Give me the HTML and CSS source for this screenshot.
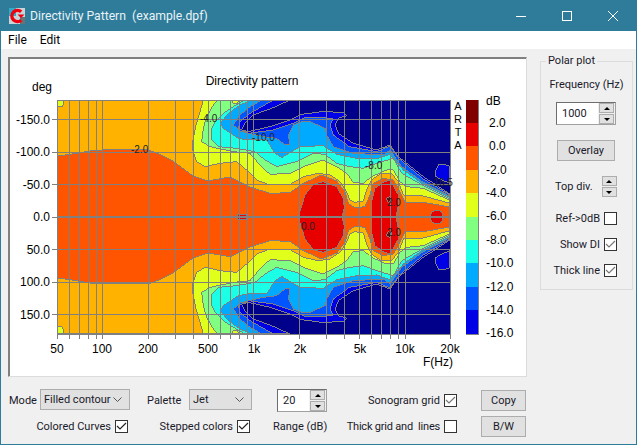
FILE: index.html
```html
<!DOCTYPE html>
<html lang="en">
<head>
<meta charset="utf-8">
<title>Directivity Pattern (example.dpf)</title>
<link rel="stylesheet" href="styles.css">
</head>
<body>
<div class="window">
  <header class="titlebar">
    <svg class="appicon" width="16" height="16" viewBox="0 0 16 16">
      <rect width="16" height="16" fill="#c9d4d8"/>
      <rect x="0" y="0" width="7" height="8" fill="#35a8c8"/>
      <rect x="11" y="9" width="5" height="7" fill="#6a7276"/>
      <path d="M12.2 3.8A5.6 5.6 0 1 0 12.2 12.2" fill="none" stroke="#f0000f" stroke-width="3.4"/>
      <path d="M8.5 6.5h7l-3.500 3.500z" fill="#f0000f"/>
    </svg>
    <span class="title">Directivity Pattern&nbsp; (example.dpf)</span>
    <div class="winbtns">
      <svg width="12" height="12" viewBox="0 0 12 12"><path d="M1 6.500h10" stroke="#fff"/></svg>
      <svg width="12" height="12" viewBox="0 0 12 12"><rect x="1.500" y="1.500" width="9" height="9" fill="none" stroke="#fff"/></svg>
      <svg width="12" height="12" viewBox="0 0 12 12"><path d="M1 1l10 10M11 1L1 11" stroke="#fff"/></svg>
    </div>
  </header>
  <nav class="menubar"><span>File</span><span>Edit</span></nav>
  <main class="content">
    <div class="upper">
      <section class="plot">
        <svg class="chart" width="517" height="318" viewBox="9 58 517 318">
          <defs><clipPath id="area"><rect x="57" y="100" width="394" height="235"/></clipPath></defs>
          <g clip-path="url(#area)">
            <rect x="57" y="100" width="394" height="235" fill="#00008b"/>
            <g transform="translate(190 95) scale(.33333)">
              <g id="half" class="contours">
                <polygon fill="#0000e6" points="738,225 745,210 765,208 780,215 780,265 755,255 738,245"/>
                <polygon fill="#0000e6" points="-399,15 300,15 250,38 190,60 165,85 155,105 175,110 240,95 300,75 335,58 395,50 460,52 470,62 445,70 435,88 445,115 490,145 560,165 600,150 625,185 700,245 780,297 780,366 -399,366"/>
                <polygon fill="#0055ff" points="-399,15 250,15 215,35 180,55 150,80 145,100 175,115 250,105 310,85 345,68 400,67 430,72 420,90 430,120 478,155 560,170 600,153 628,192 700,252 780,300 780,366 -399,366"/>
                <polygon fill="#00aaff" points="-399,15 216,15 180,35 150,60 130,90 150,108 190,118 220,125 260,130 285,150 300,150 295,120 310,90 340,78 360,80 405,100 410,120 430,155 490,175 580,180 600,165 635,215 700,262 780,304 780,366 -399,366"/>
                <polygon fill="#1affe6" points="-399,15 185,15 150,30 115,55 90,85 100,100 145,130 175,135 230,135 255,175 275,188 330,155 400,152 440,178 500,190 560,192 600,178 640,225 700,268 780,308 780,366 -399,366"/>
                <polygon fill="#80ff80" points="-399,15 165,15 130,35 100,55 75,80 63,105 65,135 85,155 140,160 195,170 225,195 260,215 320,200 370,175 405,178 440,205 480,215 520,220 560,205 610,190 635,235 700,272 780,312 780,366 -399,366"/>
                <polygon fill="#e0ff1a" points="125,15 128,25 142,27 146,15"/>
                <polygon fill="#e0ff1a" points="-399,15 85,15 70,30 50,65 40,100 35,140 60,155 130,170 180,175 210,210 240,238 300,235 340,215 400,195 440,215 470,235 490,262 520,265 545,245 590,225 610,225 630,260 650,275 700,280 780,316 780,366 -399,366"/>
                <polygon fill="#ffb300" points="-399,15 40,15 30,50 18,90 8,140 8,165 20,200 45,215 90,205 140,200 170,225 200,255 240,270 300,268 340,245 385,235 420,240 450,260 470,290 480,315 495,322 520,318 530,285 545,255 570,237 605,235 625,260 640,300 700,303 780,325 780,366 -399,366"/>
                <polygon fill="#e0ff1a" points="-399,15 -380,15 -378,28 -385,36 -399,36"/>
                <polygon fill="#ff5500" points="-399,183 -360,178 -300,168 -264,165 -126,165 -90,178 -51,198 9,243 54,258 120,246 180,276 240,295 300,293 340,265 395,240 440,258 465,290 475,325 495,338 525,335 540,300 550,265 580,250 610,255 630,290 645,322 700,322 780,336 780,366 -399,366"/>
                <polygon fill="#e60000" points="325,366 345,300 370,268 400,260 440,275 460,310 463,340 455,366"/>
                <polygon fill="#e60000" points="545,366 545,320 555,280 580,262 600,255 625,300 625,330 618,366"/>
                <polygon fill="#e60000" points="720,366 725,350 740,345 755,350 760,366"/>
                <polygon fill="#e60000" points="143,366 143,358 170,358 170,366"/>
                <polygon fill="#800000" points="588,310 600,305 606,318 594,322"/>
              </g>
              <use href="#half" transform="matrix(1 0 0 -1 0 732)"/>
            </g>
          </g>
          <path class="grid" d="M57.500 100V339M69.500 100V339M79.500 100V339M88.500 100V339M96.500 100V339M102.500 100V339M148.500 100V339M175.500 100V339M193.500 100V339M208.500 100V339M220.500 100V339M230.500 100V339M239.500 100V339M247.500 100V339M253.500 100V339M299.500 100V339M326.500 100V339M344.500 100V339M359.500 100V339M371.500 100V339M381.500 100V339M390.500 100V339M398.500 100V339M405.500 100V339M450.500 100V339M57 100.500H451M52 119.500H451M52 152.500H451M52 184.500H451M52 217.500H451M52 249.500H451M52 282.500H451M52 314.500H451M57 334.500H451"/>

          <text class="t" x="252" y="85" text-anchor="middle">Directivity pattern</text>
          <text class="t" x="32" y="91">deg</text>
          <g class="t end">
            <text x="50" y="124">-150.0</text><text x="50" y="156">-100.0</text><text x="50" y="189">-50.0</text>
            <text x="50" y="221">0.0</text><text x="50" y="254">50.0</text><text x="50" y="286">100.0</text><text x="50" y="319">150.0</text>
          </g>
          <g class="t mid">
            <text x="57" y="353">50</text><text x="102" y="353">100</text><text x="148" y="353">200</text><text x="208" y="353">500</text>
            <text x="254" y="353">1k</text><text x="300" y="353">2k</text><text x="360" y="353">5k</text><text x="405" y="353">10k</text><text x="450" y="353">20k</text>
          </g>
          <text class="t" x="423" y="366">F(Hz)</text>
          <g class="t mid arta">
            <text x="458" y="110">A</text><text x="458" y="123">R</text><text x="458" y="136">T</text><text x="458" y="149">A</text>
          </g>
          <g class="bar">
            <rect x="466" y="100" width="13" height="23" fill="#800000"/>
            <rect x="466" y="123" width="13" height="23" fill="#e60000"/>
            <rect x="466" y="146" width="13" height="24" fill="#ff5500"/>
            <rect x="466" y="170" width="13" height="23" fill="#ffb300"/>
            <rect x="466" y="193" width="13" height="24" fill="#e0ff1a"/>
            <rect x="466" y="217" width="13" height="23" fill="#80ff80"/>
            <rect x="466" y="240" width="13" height="23" fill="#1affe6"/>
            <rect x="466" y="263" width="13" height="24" fill="#00aaff"/>
            <rect x="466" y="287" width="13" height="23" fill="#0055ff"/>
            <rect x="466" y="310" width="13" height="24" fill="#0000e6"/>
          </g>
          <path class="grid" d="M478.500 100V334.500M466 334.500H479"/>
          <g class="t">
            <text x="486" y="105">dB</text><text x="489" y="127">2.0</text><text x="489" y="150">0.0</text>
            <text x="486" y="174">-2.0</text><text x="486" y="197">-4.0</text><text x="486" y="220">-6.0</text><text x="486" y="244">-8.0</text>
            <text x="486" y="267">-10.0</text><text x="486" y="291">-12.0</text><text x="486" y="314">-14.0</text><text x="486" y="337">-16.0</text>
          </g>
          <g class="t small">
            <text x="200" y="122">-4.0</text><text x="252" y="141">-10.0</text><text x="131" y="153">-2.0</text><text x="365" y="169">-8.0</text>
            <text x="430" y="186">-16.5</text><text x="387" y="206">2.0</text><text x="301" y="230">0.0</text><text x="387" y="236">2.0</text>
          </g>
        </svg>
      </section>
      <aside class="polar">
        <span class="legend">Polar plot</span>
        <div class="freq-label">Frequency (Hz)</div>
        <div class="spin freq"><span class="spin-value">1000</span><span class="arrows"><i class="up"></i><i class="down"></i></span></div>
        <button class="btn overlay">Overlay</button>
        <div class="topdiv"><span>Top div.</span><span class="arrows"><i class="up"></i><i class="down"></i></span></div>
        <label class="check"><span>Ref-&gt;0dB</span><span class="box"></span></label>
        <label class="check"><span>Show DI</span><span class="box"><svg width="11" height="11" viewBox="0 0 11 11"><path class="tick soft" d="M1 5l3 3 6-6"/></svg></span></label>
        <label class="check"><span>Thick line</span><span class="box"><svg width="11" height="11" viewBox="0 0 11 11"><path class="tick soft" d="M1 5l3 3 6-6"/></svg></span></label>
      </aside>
    </div>
    <div class="controls">
      <div class="cell c1"><span>Mode</span><div class="select mode"><span>Filled contour</span><svg width="9" height="5" viewBox="0 0 9 5"><path class="chev" d="M.5 .5l4 4 4-4"/></svg></div></div>
      <div class="cell c2"><span>Palette</span><div class="select palette"><span>Jet</span><svg width="9" height="5" viewBox="0 0 9 5"><path class="chev" d="M.5 .5l4 4 4-4"/></svg></div></div>
      <div class="cell c3"><div class="spin range"><span class="spin-value">20</span><span class="arrows"><i class="up"></i><i class="down"></i></span></div></div>
      <label class="check c4"><span>Sonogram grid</span><span class="box"><svg width="11" height="11" viewBox="0 0 11 11"><path class="tick soft" d="M1 5l3 3 6-6"/></svg></span></label>
      <button class="btn c5">Copy</button>
      <label class="check c1 r2"><span>Colored Curves</span><span class="box"><svg width="11" height="11" viewBox="0 0 11 11"><path class="tick" d="M1 5l3 3 6-6"/></svg></span></label>
      <label class="check c2 r2"><span>Stepped colors</span><span class="box"><svg width="11" height="11" viewBox="0 0 11 11"><path class="tick" d="M1 5l3 3 6-6"/></svg></span></label>
      <div class="cell c3 r2 range-label"><span>Range (dB)</span></div>
      <label class="check c4 r2"><span class="tight">Thick grid and &nbsp;lines</span><span class="box"></span></label>
      <button class="btn c5 r2">B/W</button>
    </div>
  </main>
</div>
</body>
</html>
```
FILE: styles.css
```css
* { box-sizing: border-box; }
html, body { margin: 0; padding: 0; }
body { width: 637px; height: 445px; overflow: hidden; font: 11px/16px Roboto, "Open Sans", sans-serif; color: #1a1a2a; }

.window { width: 637px; height: 445px; display: flex; flex-direction: column; background: #f0f0f0; border: 1px solid #2e7c9a; border-top: 0; }

.titlebar { height: 31px; flex: none; margin: 0 -1px; padding: 0 18px 0 9px; display: flex; align-items: center; background: #2e7c9a; color: #e8f2f6; }
.appicon { flex: none; }
.title { margin-left: 5px; flex: 1; white-space: nowrap; font-size: 12.2px; }
.winbtns { display: flex; gap: 34px; }
.winbtns svg { display: block; }

.menubar { height: 18px; flex: none; background: #fff; display: flex; gap: 13px; padding-left: 7px; align-items: center; color: #000; font-size: 12px; }

.content { flex: 1; display: flex; flex-direction: column; }
.upper { display: flex; align-items: flex-start; padding: 8px 0 0 7px; }

.plot { width: 519px; height: 320px; background: #fff; border: 1px solid; border-color: #808080 #dcdcdc #dcdcdc #808080; box-shadow: inset 1px 1px 0 #808080; flex: none; }
.chart { display: block; }
.t { font: 12px "Liberation Sans", Arial, sans-serif; fill: #000; }
.small { font-size: 10px; fill: #222; }
.arta { font-size: 11px; }
.end { text-anchor: end; }
.mid { text-anchor: middle; }
.contours polygon { stroke: #808080; stroke-width: 3; shape-rendering: crispEdges; }
.grid { fill: none; stroke: #808080; stroke-width: 1; shape-rendering: crispEdges; }
.bar rect { shape-rendering: crispEdges; }

.polar { position: relative; width: 93px; height: 229px; margin: 4px 0 0 13px; border: 1px solid #dcdcdc; display: flex; flex-direction: column; align-items: center; flex: none; }
.legend { position: absolute; left: 5px; top: -8px; padding: 0 2px; background: #f0f0f0; line-height: 14px; }
.freq-label { margin-top: 15px; white-space: nowrap; }
.spin { display: flex; align-items: center; background: #fff; border: 1px solid #a0a0a0; border-top-color: #6e6e6e; border-left-color: #6e6e6e; }
.spin-value { flex: 1; padding-left: 5px; }
.freq { width: 60px; height: 23px; margin-top: 9px; align-self: flex-start; margin-left: 15px; }
.range { width: 50px; height: 23px; }
.arrows { display: flex; flex-direction: column; gap: 1px; }
.arrows i { display: flex; width: 15px; height: 10px; background: #e1e1e1; border: 1px solid #adadad; align-items: center; justify-content: center; }
.arrows i::before { content: ""; border-left: 3px solid transparent; border-right: 3px solid transparent; }
.arrows .up::before { border-bottom: 3px solid #000; }
.arrows .down::before { border-top: 3px solid #000; }
.spin .arrows { width: 17px; padding: 0 1px; background: #f0f0f0; height: 100%; justify-content: center; }

.btn { display: block; padding: 0; font: inherit; color: inherit; background: #e1e1e1; border: 1px solid #adadad; }
.overlay { width: 58px; height: 21px; margin-top: 15px; align-self: flex-start; margin-left: 16px; }

.topdiv { align-self: flex-start; display: flex; align-items: center; gap: 9px; margin: 15px 0 0 14px; }
.check { display: flex; align-items: center; justify-content: flex-end; gap: 4px; white-space: nowrap; }
.polar .check { align-self: stretch; padding-right: 15px; height: 13px; margin-top: 13px; }
.polar .topdiv + .check { margin-top: 15px; }
.box { width: 13px; height: 13px; flex: none; background: #fff; border: 1px solid #333; display: block; }
.box svg { display: block; }
.tick { fill: none; stroke: #222; stroke-width: 1.2; }
.tick.soft { stroke: #777; }
.tight { letter-spacing: -.2px; }

.controls { margin-top: 12px; display: grid; grid-template-columns: 121px 122px 78px 127px 69px; grid-template-rows: 23px 21px; row-gap: 4px; padding-left: 8px; }
.cell { display: flex; align-items: flex-start; justify-content: space-between; white-space: nowrap; }
.c1 { grid-column: 1; }
.c1.check { padding-right: 2px; }
.c2 { grid-column: 2; margin-left: 17px; }
.c2.check { padding-right: 2px; }
.c3 { grid-column: 3; margin-left: 25px; }
.range-label { margin-left: 21px; align-items: center; }
.c4 { grid-column: 4; }
.c5 { grid-column: 5; margin-left: 24px; width: 45px; height: 21px; }
.btn.c5:not(.r2) { margin-top: 1px; }
.r2 { grid-row: 2; }
.cell > span { line-height: 24px; }
.range-label > span { line-height: 16px; }
.select { height: 21px; background: #e1e1e1; border: 1px solid #adadad; display: flex; align-items: center; justify-content: space-between; padding: 0 7px 0 3px; white-space: nowrap; }
.mode { width: 90px; }
.palette { width: 63px; }
.chev { fill: none; stroke: #555; }
```
